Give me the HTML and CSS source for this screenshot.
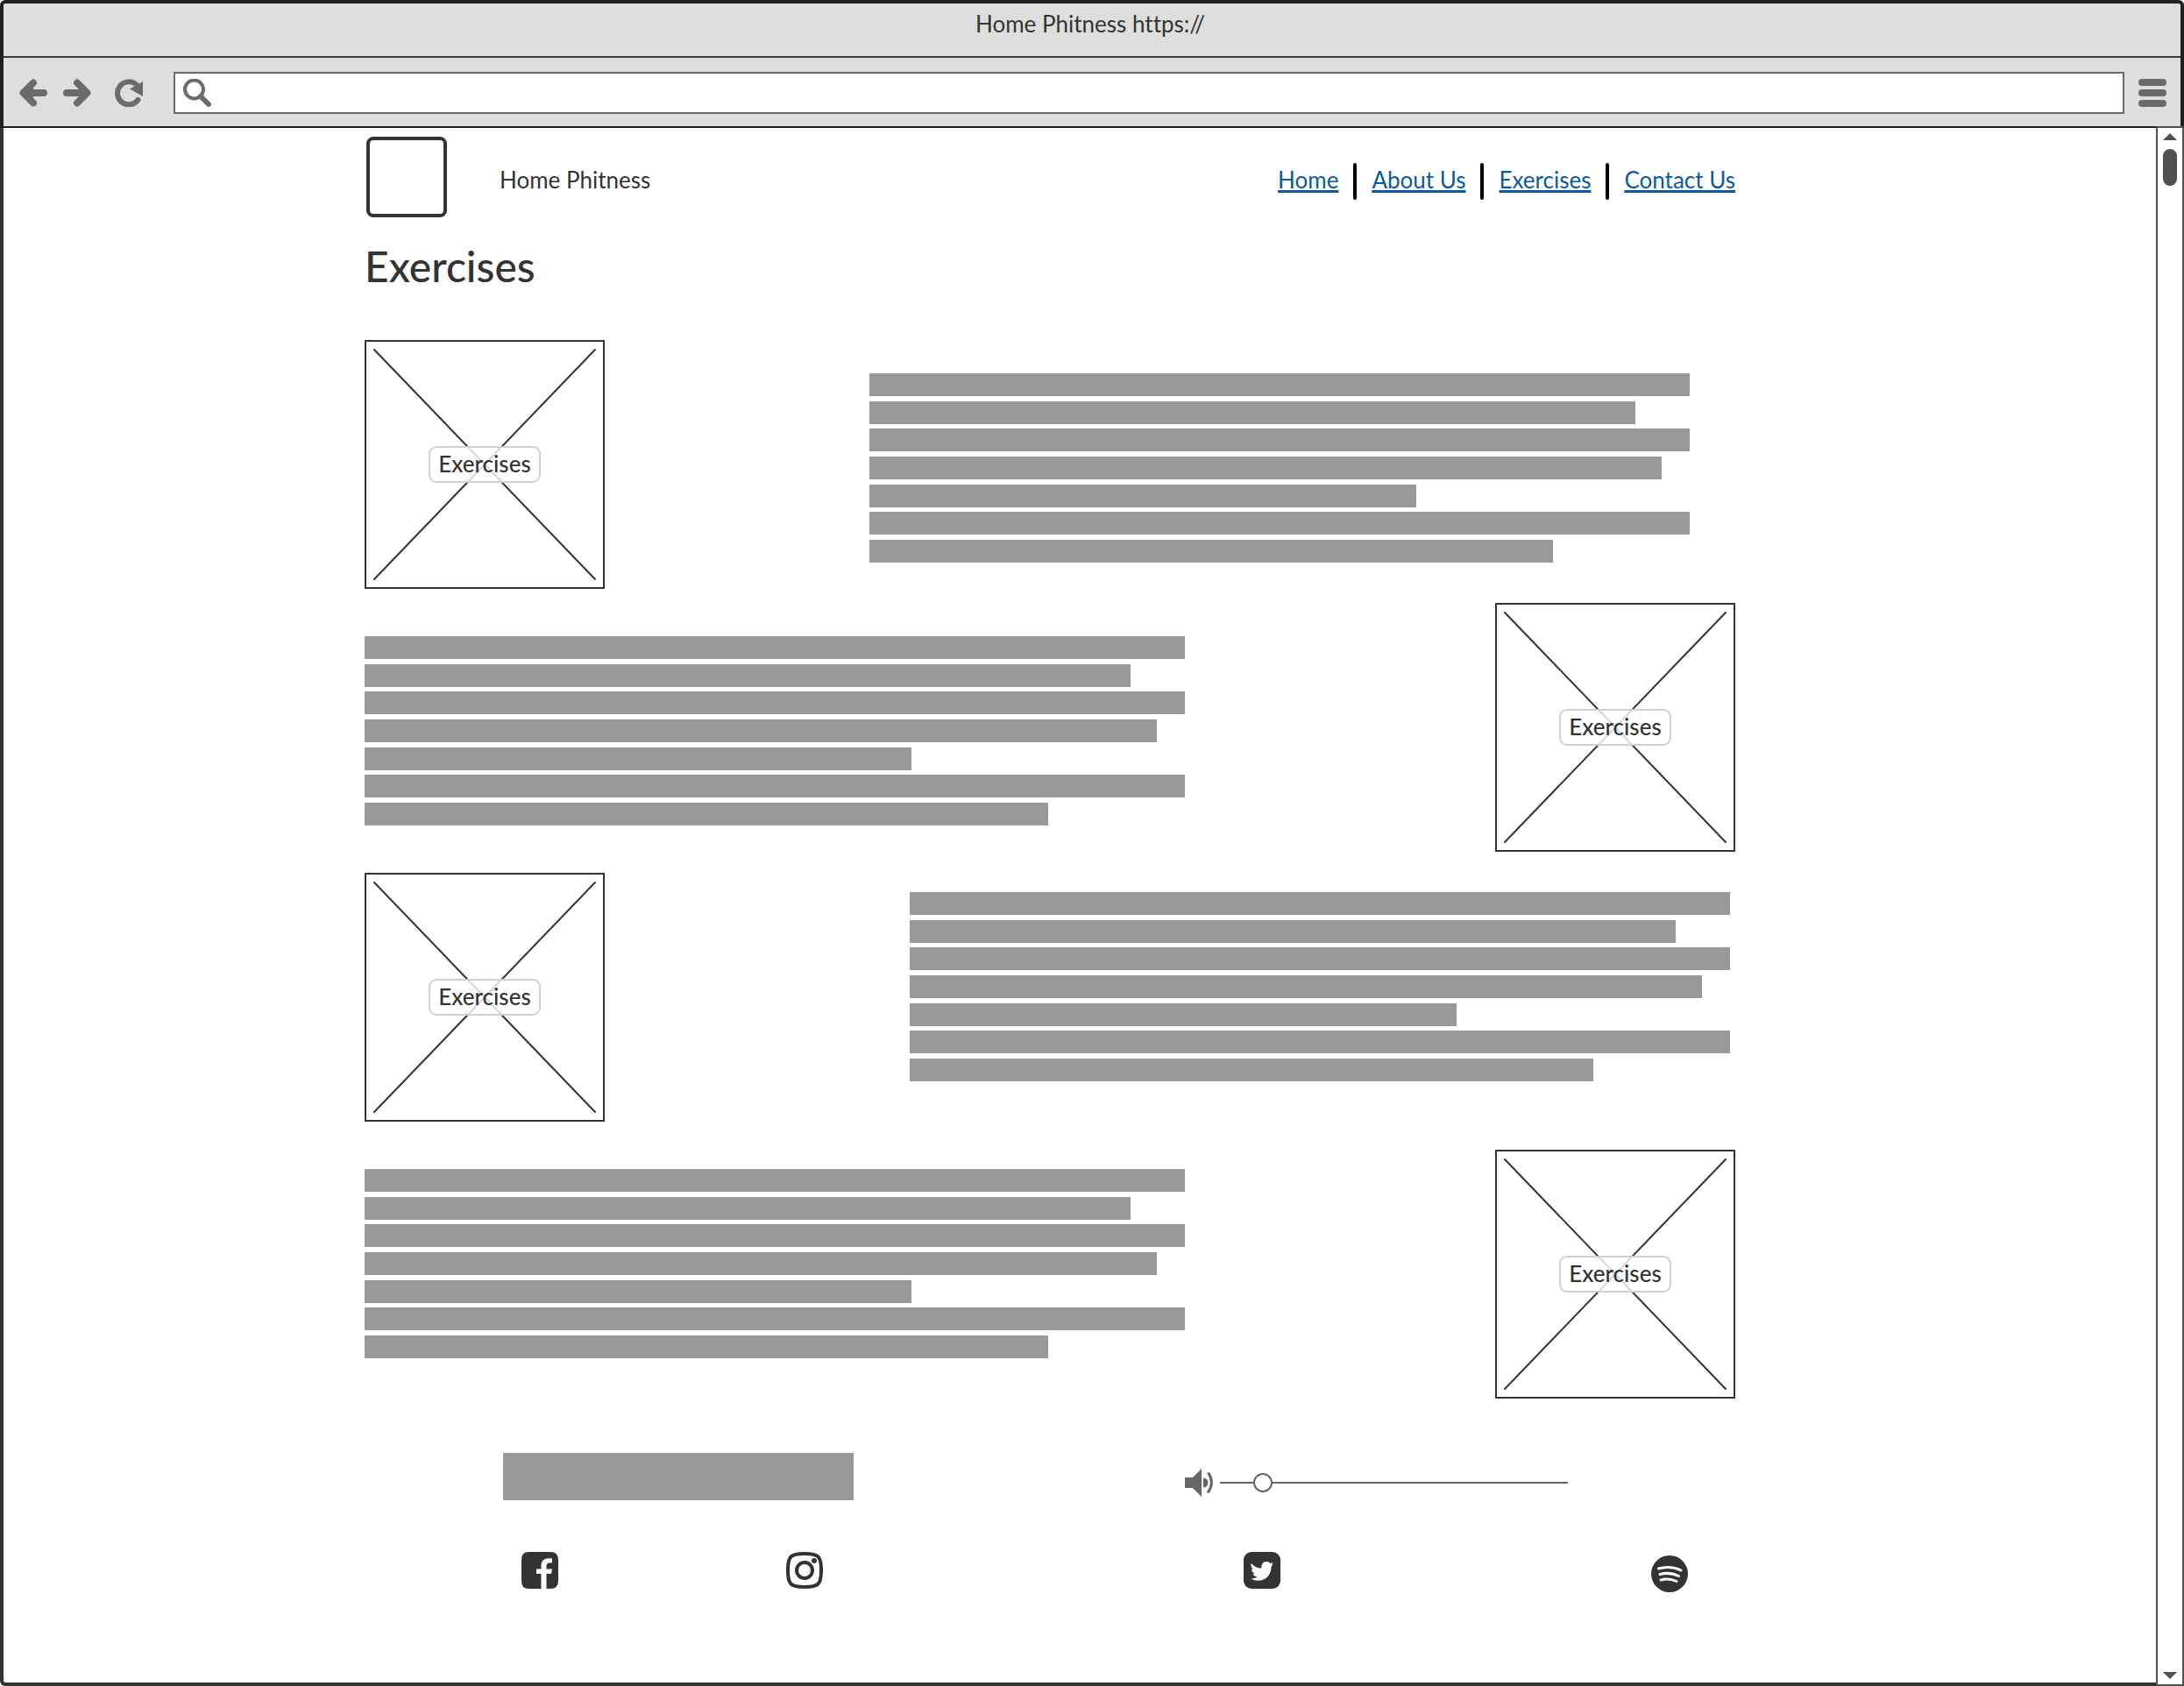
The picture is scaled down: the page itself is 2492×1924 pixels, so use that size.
FILE: index.html
```html
<!DOCTYPE html>
<html lang="en">
<head>
<meta charset="utf-8">
<title>Home Phitness</title>
<link rel="stylesheet" href="styles.css">
</head>
<body>
<div class="browser">
  <div class="chrome">
    <div class="titlebar">Home Phitness https://</div>
    <div class="toolbar">
      <button class="tool back" type="button" aria-label="Back">
        <svg viewBox="0 0 32 32"><path d="M28 16H8M16 4.500L4.500 16L16 27.500" fill="none" stroke="currentColor" stroke-width="8" stroke-linecap="round" stroke-linejoin="round"/><path d="M5 16L16 5V27Z" fill="currentColor"/></svg>
      </button>
      <button class="tool forward" type="button" aria-label="Forward">
        <svg viewBox="0 0 32 32"><path d="M4 16H24M16 4.500L27.500 16L16 27.500" fill="none" stroke="currentColor" stroke-width="8" stroke-linecap="round" stroke-linejoin="round"/></svg>
      </button>
      <button class="tool reload" type="button" aria-label="Reload">
        <svg viewBox="0 0 32 32"><path d="M26.500 24A13 13 0 1 1 24.500 6.500" fill="none" stroke="currentColor" stroke-width="6" stroke-linecap="round"/><path d="M32 3V20L17 11.500Z" fill="currentColor"/></svg>
      </button>
      <label class="address">
        <svg class="search-icon" viewBox="0 0 32 32" aria-hidden="true"><circle cx="12.500" cy="12" r="10.500" fill="none" stroke="currentColor" stroke-width="4"/><path d="M20 20L29 29" stroke="currentColor" stroke-width="6" stroke-linecap="round"/></svg>
        <input type="text" aria-label="Address">
      </label>
      <button class="tool menu" type="button" aria-label="Menu">
        <svg viewBox="0 0 32 32" fill="currentColor"><rect width="32" height="8" rx="4"/><rect y="12" width="32" height="8" rx="4"/><rect y="24" width="32" height="8" rx="4"/></svg>
      </button>
    </div>
  </div>

  <div class="viewport">
    <div class="page">
      <div class="content">
        <header class="site-header">
          <div class="logo"></div>
          <span class="brand">Home Phitness</span>
          <nav class="site-nav">
            <a href="#">Home</a>
            <span class="divider"></span>
            <a href="#">About Us</a>
            <span class="divider"></span>
            <a href="#">Exercises</a>
            <span class="divider"></span>
            <a href="#">Contact Us</a>
          </nav>
        </header>

        <main>
          <h1>Exercises</h1>

          <section class="row">
            <div class="picture"><svg viewBox="0 0 270 280" preserveAspectRatio="none"><path d="M9 9L261 271M261 9L9 271"/></svg><span>Exercises</span></div>
            <div class="lines inset"><i></i><i></i><i></i><i></i><i></i><i></i><i></i></div>
          </section>
          <section class="row row-2">
            <div class="lines"><i></i><i></i><i></i><i></i><i></i><i></i><i></i></div>
            <div class="picture"><svg viewBox="0 0 270 280" preserveAspectRatio="none"><path d="M9 9L261 271M261 9L9 271"/></svg><span>Exercises</span></div>
          </section>
          <section class="row row-3 raised">
            <div class="picture"><svg viewBox="0 0 270 280" preserveAspectRatio="none"><path d="M9 9L261 271M261 9L9 271"/></svg><span>Exercises</span></div>
            <div class="lines nudge"><i></i><i></i><i></i><i></i><i></i><i></i><i></i></div>
          </section>
          <section class="row row-4 raised">
            <div class="lines"><i></i><i></i><i></i><i></i><i></i><i></i><i></i></div>
            <div class="picture"><svg viewBox="0 0 270 280" preserveAspectRatio="none"><path d="M9 9L261 271M261 9L9 271"/></svg><span>Exercises</span></div>
          </section>
        </main>

        <footer>
          <div class="player">
            <div class="caption"></div>
            <label class="volume">
              <svg viewBox="0 0 32 32" aria-hidden="true"><path d="M0 10H9L19 0V32L9 22H0Z" fill="currentColor"/><path d="M21 10.500A5.500 5.500 0 0 1 21 21.500Z" fill="currentColor"/><path d="M26.500 4.500Q34.500 16 26 27.500" fill="none" stroke="currentColor" stroke-width="3"/></svg>
              <input type="range" min="0" max="100" value="10" aria-label="Volume">
            </label>
          </div>
          <div class="social">
            <a href="#" aria-label="Facebook"><svg viewBox="0 0 44 48"><path d="M9 1H34Q43 1 43 10V34Q43 43 34 43H29.500V26H35L36 20.500H29.500V17Q29.500 13.500 33 13.500H36V8.500Q24 6.500 23.500 16V20.500H18V26H23.500V43H9Q1 43 1 34V10Q1 1 9 1Z" fill="currentColor"/></svg></a>
            <a href="#" aria-label="Instagram"><svg viewBox="0 0 44 48"><path d="M22 3C38 3 41 6 41 22S38 41 22 41S3 38 3 22S6 3 22 3Z" fill="none" stroke="currentColor" stroke-width="4"/><circle cx="22" cy="22" r="9" fill="none" stroke="currentColor" stroke-width="4"/><circle cx="33" cy="11" r="3" fill="currentColor"/></svg></a>
            <a href="#" aria-label="Twitter"><svg viewBox="0 0 44 48"><rect x="1" y="1" width="42" height="42" rx="9" fill="currentColor"/><path d="M9.500 14Q14.500 19.500 21.500 19.500C20.500 12 28 10 31.500 14L34.500 13L33 15.500L34.500 15.500L32.500 18C32.500 32 19 37 9.500 31.500Q14 31.500 16.500 29.500Q12.500 29 11.500 26H14Q10 24 10 20.500L12 21Q8.500 17.500 9.500 14Z" fill="#fff"/></svg></a>
            <a href="#" aria-label="Spotify"><svg viewBox="0 0 44 48"><circle cx="22" cy="26" r="21" fill="currentColor"/><path d="M9.500 20Q23 16 35 22M11 26.500Q22 23.500 32.500 28.500M12 33Q21 30.500 30 34.500" fill="none" stroke="#fff" stroke-width="3" stroke-linecap="round"/></svg></a>
          </div>
        </footer>
      </div>
    </div>
    <div class="scrollbar">
      <button type="button" aria-label="Scroll up"><svg viewBox="0 0 16 8"><path d="M0 8L8 0L16 8Z" fill="currentColor"/></svg></button>
      <div class="thumb"></div>
      <button class="down" type="button" aria-label="Scroll down"><svg viewBox="0 0 16 8"><path d="M0 0L8 8L16 0Z" fill="currentColor"/></svg></button>
    </div>
  </div>
</div>
</body>
</html>
```
FILE: styles.css
```css
* {
  box-sizing: border-box;
}

body {
  margin: 0;
  background: #fff;
  color: #333;
  font-family: Lato, "Liberation Sans", sans-serif;
  font-size: 26px;
  font-variant-ligatures: none;
  line-height: 32px;
}

button {
  padding: 0;
  border: 0;
  background: none;
  color: inherit;
}

svg {
  display: block;
}

.browser {
  display: flex;
  flex-direction: column;
  min-height: 100vh;
}

/* Window frame */
.chrome {
  border: 4px solid #231f20;
  border-bottom-width: 2px;
  border-radius: 6px 6px 0 0;
  background: #dededd;
}

.titlebar {
  height: 62px;
  padding: 7px 4px 0 0;
  border-bottom: 2px solid #3a3a3a;
  text-align: center;
}

.toolbar {
  display: flex;
  align-items: center;
  height: 78px;
  padding: 2px 16px 0 18px;
  color: #6b6b6b;
}

.tool svg {
  width: 32px;
  height: 32px;
}

.forward {
  margin-left: 18px;
}

.reload {
  margin-left: 27px;
}

.address {
  display: flex;
  flex: 1;
  align-items: center;
  height: 48px;
  margin: 0 16px 0 35px;
  padding-left: 9px;
  border: 2px solid #6b6b6b;
  background: #fff;
}

.search-icon {
  width: 32px;
  height: 32px;
}

.address input {
  flex: 1;
  min-width: 0;
  padding: 0 8px;
  border: 0;
  outline: 0;
  background: none;
  font: inherit;
}

.viewport {
  display: flex;
  flex: 1;
}

.page {
  display: grid;
  flex: 1;
  grid-template-columns: 412fr minmax(0, 1564px) 480fr;
  border: solid #333;
  border-width: 0 0 4px 4px;
  border-radius: 0 0 0 6px;
}

.content {
  grid-column: 2;
}

/* Scrollbar */
.scrollbar {
  display: flex;
  flex-direction: column;
  align-items: center;
  width: 32px;
  margin-top: -2px;
  padding: 6px 0;
  border: 2px solid #505050;
  color: #505050;
}

.scrollbar svg {
  width: 16px;
  height: 8px;
}

.thumb {
  width: 16px;
  height: 42px;
  margin-top: 10px;
  border-radius: 8px;
  background: #505050;
}

.down {
  margin-top: auto;
}

/* Site header */
.site-header {
  display: flex;
  align-items: center;
  padding: 10px 0 0 2px;
}

.logo {
  width: 92px;
  height: 92px;
  border: 4px solid #333;
  border-radius: 8px;
}

.brand {
  margin-left: 60px;
  padding-top: 6px;
}

.site-nav {
  display: flex;
  align-items: center;
  gap: 17px;
  margin-left: auto;
  padding-top: 10px;
}

.site-nav a {
  padding-bottom: 4px;
  color: #0b5a9d;
  text-decoration: underline;
  text-decoration-thickness: 3px;
  text-underline-offset: 2px;
  text-decoration-skip-ink: none;
}

.divider {
  width: 4px;
  height: 42px;
  border-radius: 2px;
  background: #000;
}

h1 {
  margin: 27px 0 55px;
  font-size: 48px;
  font-weight: 500;
  line-height: 58px;
}

/* Exercise rows */
.row {
  display: flex;
  justify-content: space-between;
}

.row-2 {
  margin-top: 16px;
}

.row-3 {
  margin-top: 24px;
}

.row-4 {
  margin-top: 32px;
}

.picture {
  display: grid;
  place-items: center;
  width: 274px;
  height: 284px;
  border: 2px solid #333;
}

.picture svg,
.picture span {
  grid-area: 1 / 1;
}

.picture svg {
  width: 100%;
  height: 100%;
  fill: none;
  stroke: #333;
  stroke-width: 2;
  stroke-linecap: round;
}

.picture span {
  z-index: 1;
  width: 128px;
  height: 42px;
  border: 2px solid #d0d0d0;
  border-radius: 9px;
  background: rgba(255, 255, 255, 0.8);
  font-weight: 500;
  line-height: 36px;
  text-align: center;
}

.lines {
  display: flex;
  flex-direction: column;
  justify-content: space-between;
  width: 936px;
  height: 216px;
  margin-top: 38px;
}

.raised .lines {
  margin-top: 22px;
}

.inset {
  margin-right: 52px;
}

.nudge {
  margin-right: 6px;
}

.lines i {
  width: 100%;
  height: 26px;
  background: #999;
}

.lines i:nth-child(2) {
  width: 93.35%;
}

.lines i:nth-child(4) {
  width: 96.6%;
}

.lines i:nth-child(5) {
  width: 66.67%;
}

.lines i:nth-child(7) {
  width: 83.33%;
}

/* Footer */
.player {
  display: flex;
  margin-top: 62px;
  padding-left: 158px;
}

.caption {
  width: 400px;
  height: 54px;
  background: #999;
}

.volume {
  display: flex;
  align-items: center;
  gap: 8px;
  height: 32px;
  margin: 18px 0 0 378px;
  color: #666;
}

.volume svg {
  width: 32px;
  height: 32px;
}

.volume input {
  width: 397px;
  height: 24px;
  margin: 0;
  background: linear-gradient(#666, #666) center / 100% 2px no-repeat;
  appearance: none;
}

.volume input::-webkit-slider-thumb {
  width: 22px;
  height: 22px;
  border: 2px solid #666;
  border-radius: 50%;
  background: #fff;
  appearance: none;
}

.social {
  display: grid;
  grid-template-columns: 302fr 522fr 465fr 97fr;
  margin: 58px 0 100px;
  padding-left: 178px;
}

.social a {
  width: 44px;
  color: #333;
}
```
